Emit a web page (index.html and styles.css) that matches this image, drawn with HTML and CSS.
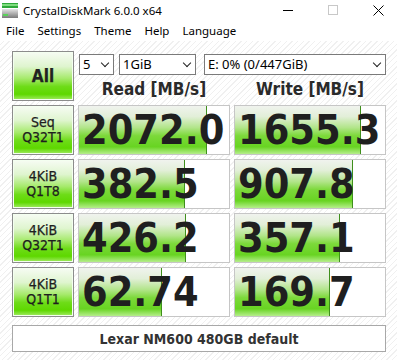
FILE: index.html
```html
<!DOCTYPE html>
<html>
  <head>
    <meta name="viewport" content="width=device-width, initial-scale=1.0" />
    <title>CrystalDiskMark 6.0.0 x64</title>
    <link rel="stylesheet" href="styles.css">
  </head>
  <body>
    <div class="titlebar">
      <svg class="app-icon" width="16" height="15" viewBox="0 0 16 15">
        <defs>
          <linearGradient id="drive" x1="0" y1="0" x2="0" y2="1">
            <stop offset="0" stop-color="#e4e4e4" />
            <stop offset="1" stop-color="#7a7a7a" />
          </linearGradient>
        </defs>
        <rect x="0" y="0" width="16" height="5" fill="#2fa83a" />
        <rect x="0" y="1" width="16" height="2" fill="#7fdc7f" />
        <rect x="0" y="6" width="16" height="9" fill="url(#drive)" />
        <rect x="1" y="11" width="5" height="2" fill="#5ad25a" />
      </svg>
      <span class="title">CrystalDiskMark 6.0.0 x64</span>
      <div class="controls">
        <svg width="10" height="10" viewBox="0 0 10 10"><path d="M0 5.5h10" stroke="#000" stroke-width="1" /></svg>
        <svg width="10" height="10" viewBox="0 0 10 10"><rect x="0.5" y="0.5" width="9" height="9" fill="none" stroke="#c8c8c8" /></svg>
        <svg width="11" height="11" viewBox="0 0 11 11"><path d="M0.5 0.5l10 10M10.5 0.5l-10 10" stroke="#000" stroke-width="1" /></svg>
      </div>
    </div>

    <ul class="menu">
      <li>File</li>
      <li>Settings</li>
      <li>Theme</li>
      <li>Help</li>
      <li>Language</li>
    </ul>

    <div class="main">
      <div class="label all">All</div>
      <div class="top">
        <div class="selects">
          <div class="select s-count">5<span class="chev"></span></div>
          <div class="select s-size">1GiB<span class="chev"></span></div>
          <div class="select s-drive">E: 0% (0/447GiB)<span class="chev"></span></div>
        </div>
        <div class="heads">
          <div>Read [MB/s]</div>
          <div>Write [MB/s]</div>
        </div>
      </div>

      <div class="label">Seq<br>Q32T1</div>
      <div class="result"><div class="bar" style="width: 128px"></div><span>2072.0</span></div>
      <div class="result"><div class="bar" style="width: 126px"></div><span>1655.3</span></div>

      <div class="label">4KiB<br>Q1T8</div>
      <div class="result"><div class="bar" style="width: 106px"></div><span>382.5</span></div>
      <div class="result"><div class="bar" style="width: 118px"></div><span>907.8</span></div>

      <div class="label">4KiB<br>Q32T1</div>
      <div class="result"><div class="bar" style="width: 107px"></div><span>426.2</span></div>
      <div class="result"><div class="bar" style="width: 105px"></div><span>357.1</span></div>

      <div class="label">4KiB<br>Q1T1</div>
      <div class="result"><div class="bar" style="width: 83px"></div><span>62.74</span></div>
      <div class="result"><div class="bar" style="width: 95px"></div><span>169.7</span></div>

      <div class="comment">Lexar NM600 480GB default</div>
    </div>
  </body>
</html>
```

FILE: styles.css
```css
body {
  margin: 0;
  width: 397px;
  height: 360px;
  overflow: hidden;
  background: #fff;
  font-family: "Noto Sans", "Open Sans", sans-serif;
  color: #000;
}

/* window title */
.titlebar {
  height: 20px;
  display: flex;
  align-items: center;
  background: #fff;
}

.app-icon {
  margin-left: 2px;
  margin-top: 1px;
}

.title {
  margin-left: 5px;
  font-size: 11.5px;
}

.controls {
  margin-left: auto;
  display: flex;
  align-items: center;
  gap: 35px;
  padding-right: 13px;
}

/* menu */
.menu {
  list-style: none;
  margin: 0;
  padding: 0 0 0 6px;
  height: 21px;
  display: flex;
  align-items: center;
  gap: 13px;
  font-size: 11.5px;
  background: #fff;
}

/* main panel */
.main {
  height: 319px;
  box-sizing: border-box;
  padding: 10px 11px 0 12px;
  background: repeating-linear-gradient(
    -45deg,
    #ffffff 0 3px,
    #f0f0f0 3px 4px
  );
  display: grid;
  grid-template-columns: 62px 152px 152px;
  grid-template-rows: repeat(5, 50px) 31px;
  gap: 4px;
  font-family: "DejaVu Sans Condensed", "DejaVu Sans", sans-serif;
  font-stretch: condensed;
}

.label {
  box-sizing: border-box;
  border: 1px solid #8c8c8c;
  box-shadow: inset 0 0 0 1px #f4fff0;
  background: linear-gradient(
    #f7fcf4 0%,
    #dff5cf 30%,
    #a6ea6c 55%,
    #6edc18 72%,
    #5ed800 88%,
    #a4ec66 100%
  );
  display: flex;
  align-items: center;
  justify-content: center;
  text-align: center;
  font-size: 14px;
  line-height: 15px;
  color: #1e1e1e;
  -webkit-text-stroke: 0.25px #1e1e1e;
}

.all {
  font-size: 17px;
  font-weight: bold;
  color: #222;
}

.top {
  grid-column: 2 / 4;
  display: flex;
  flex-direction: column;
}

.selects {
  display: flex;
  margin-top: 3px;
  margin-left: 1px;
}

.select {
  box-sizing: border-box;
  height: 21px;
  border: 1px solid #7a7a7a;
  background: #fff;
  font-family: "Noto Sans", "Open Sans", sans-serif;
  font-stretch: normal;
  font-size: 13px;
  line-height: 19px;
  padding-left: 3px;
  display: flex;
  align-items: center;
}

.s-count {
  width: 35px;
}

.s-size {
  width: 77px;
  margin-left: 5px;
}

.s-drive {
  width: 182px;
  margin-left: 8px;
}

.chev {
  margin-left: auto;
  margin-right: 5px;
  width: 5px;
  height: 5px;
  border-right: 1.5px solid #222;
  border-bottom: 1.5px solid #222;
  transform: translateY(-2px) rotate(45deg);
}

.heads {
  flex: 1;
  display: grid;
  grid-template-columns: 152px 152px;
  column-gap: 4px;
  align-items: center;
  text-align: center;
  font-size: 17px;
  font-weight: bold;
  color: #2a2a2a;
  padding-top: 1px;
}

.result {
  position: relative;
  box-sizing: border-box;
  border: 1px solid #c6c6c6;
  background: #fff;
  overflow: hidden;
}

.bar {
  position: absolute;
  top: 0;
  left: 0;
  bottom: 0;
  box-sizing: border-box;
  border-right: 1px solid #3f8f1c;
  background: linear-gradient(
    #f0f3ee 0%,
    #e2efd8 22%,
    #b2e58a 45%,
    #7cd93a 62%,
    #68d422 85%,
    #b6ee8c 100%
  );
}

.result span {
  position: relative;
  display: block;
  padding-left: 3px;
  font-size: 41px;
  line-height: 48px;
  font-weight: bold;
  color: #1f1f1f;
}

.comment {
  grid-column: 1 / 4;
  margin-top: 4px;
  box-sizing: border-box;
  border: 1px solid #a8a8a8;
  background: #fff;
  display: flex;
  align-items: center;
  justify-content: center;
  font-size: 14px;
  font-weight: bold;
  color: #333;
}
```
